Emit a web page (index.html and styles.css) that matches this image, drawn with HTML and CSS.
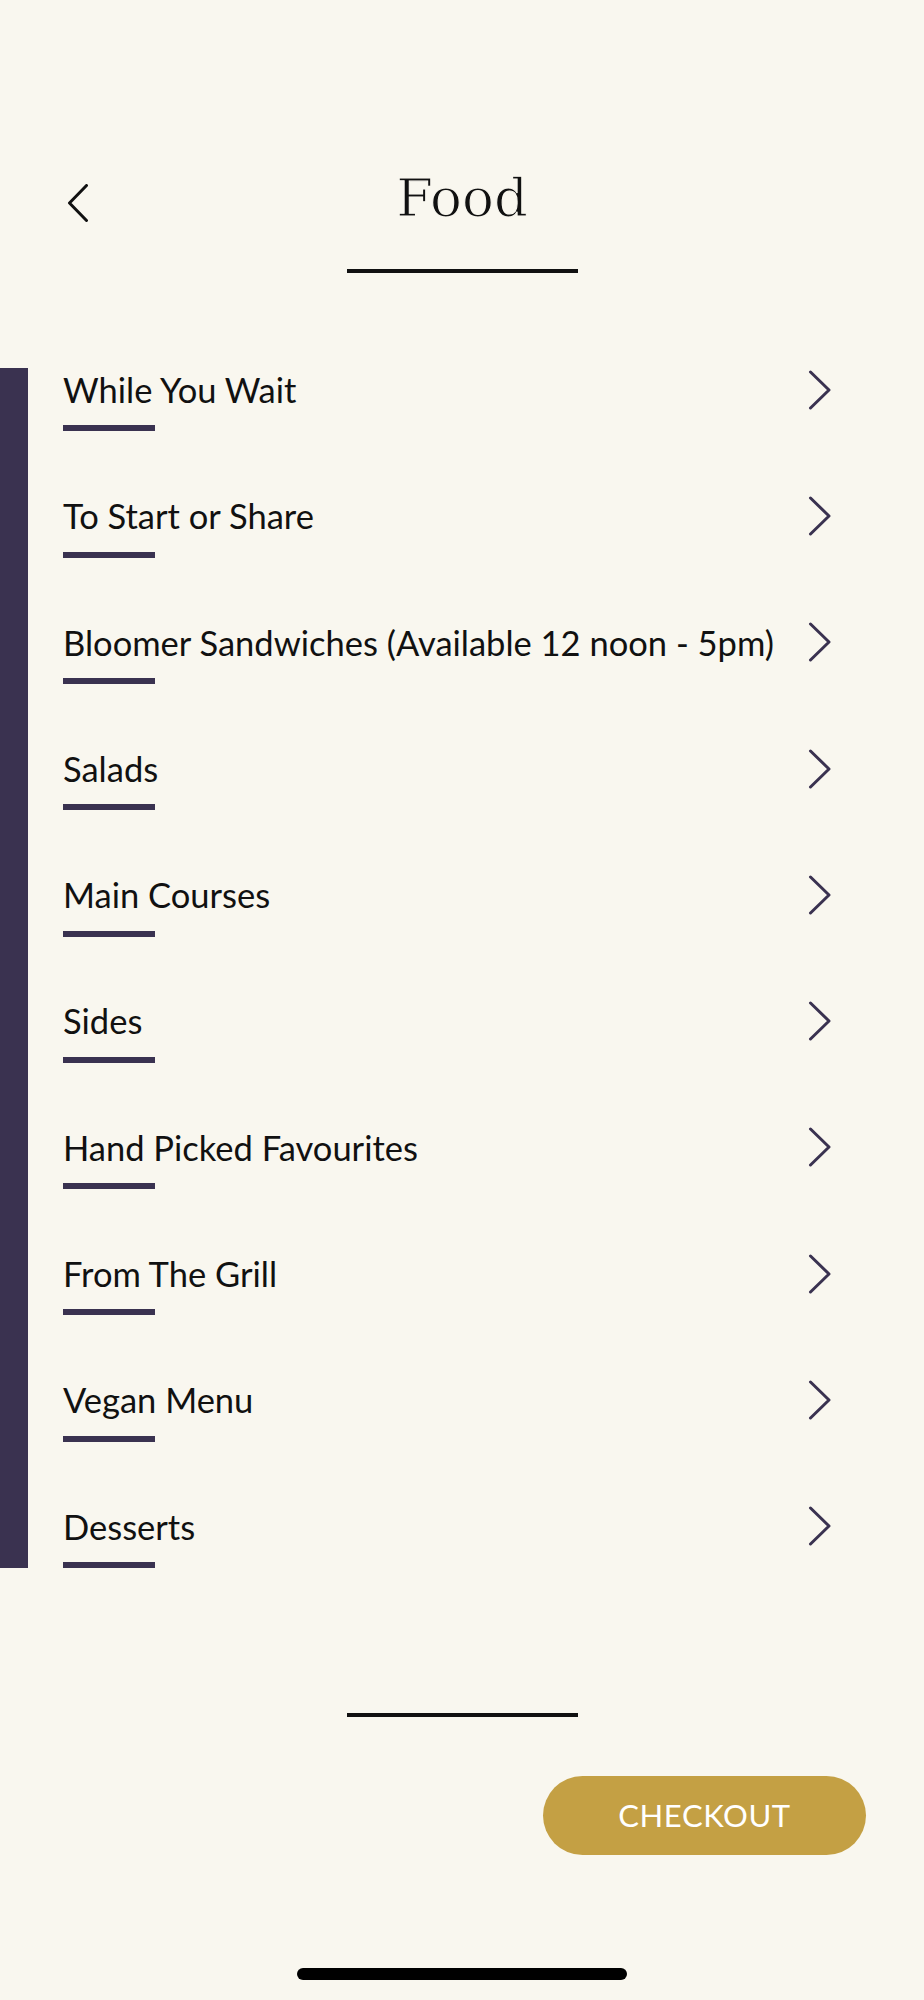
FILE: index.html
```html
<!DOCTYPE html>
<html lang="en">
<head>
  <meta charset="UTF-8">
  <meta name="viewport" content="width=device-width, initial-scale=1.0">
  <title>Food</title>
  <link rel="stylesheet" href="styles.css">
</head>
<body>
  <div class="screen">
    <!-- Header -->
    <header class="top-bar">
      <div class="title-row">
        <button class="back" aria-label="Back">
          <svg width="22" height="38" viewBox="0 0 22 38">
            <path d="M19.5 1.5 L2.5 19 L19.5 36.5" fill="none" stroke="#111" stroke-width="3" stroke-linecap="round" stroke-linejoin="round"/>
          </svg>
        </button>
        <h1 class="page-title">Food</h1>
        <span></span>
      </div>
      <div class="rule"></div>
    </header>

    <!-- Categories -->
    <ul class="menu">
      <li class="menu-item">
        <div class="menu-row"><span>While You Wait</span><svg class="chev" width="24" height="40" viewBox="0 0 24 40"><path d="M2.5 2 L21 20 L2.5 38"/></svg></div>
        <div class="menu-bar"></div>
      </li>
      <li class="menu-item">
        <div class="menu-row"><span>To Start or Share</span><svg class="chev" width="24" height="40" viewBox="0 0 24 40"><path d="M2.5 2 L21 20 L2.5 38"/></svg></div>
        <div class="menu-bar"></div>
      </li>
      <li class="menu-item">
        <div class="menu-row"><span>Bloomer Sandwiches (Available 12 noon - 5pm)</span><svg class="chev" width="24" height="40" viewBox="0 0 24 40"><path d="M2.5 2 L21 20 L2.5 38"/></svg></div>
        <div class="menu-bar"></div>
      </li>
      <li class="menu-item">
        <div class="menu-row"><span>Salads</span><svg class="chev" width="24" height="40" viewBox="0 0 24 40"><path d="M2.5 2 L21 20 L2.5 38"/></svg></div>
        <div class="menu-bar"></div>
      </li>
      <li class="menu-item">
        <div class="menu-row"><span>Main Courses</span><svg class="chev" width="24" height="40" viewBox="0 0 24 40"><path d="M2.5 2 L21 20 L2.5 38"/></svg></div>
        <div class="menu-bar"></div>
      </li>
      <li class="menu-item">
        <div class="menu-row"><span>Sides</span><svg class="chev" width="24" height="40" viewBox="0 0 24 40"><path d="M2.5 2 L21 20 L2.5 38"/></svg></div>
        <div class="menu-bar"></div>
      </li>
      <li class="menu-item">
        <div class="menu-row"><span>Hand Picked Favourites</span><svg class="chev" width="24" height="40" viewBox="0 0 24 40"><path d="M2.5 2 L21 20 L2.5 38"/></svg></div>
        <div class="menu-bar"></div>
      </li>
      <li class="menu-item">
        <div class="menu-row"><span>From The Grill</span><svg class="chev" width="24" height="40" viewBox="0 0 24 40"><path d="M2.5 2 L21 20 L2.5 38"/></svg></div>
        <div class="menu-bar"></div>
      </li>
      <li class="menu-item">
        <div class="menu-row"><span>Vegan Menu</span><svg class="chev" width="24" height="40" viewBox="0 0 24 40"><path d="M2.5 2 L21 20 L2.5 38"/></svg></div>
        <div class="menu-bar"></div>
      </li>
      <li class="menu-item">
        <div class="menu-row"><span>Desserts</span><svg class="chev" width="24" height="40" viewBox="0 0 24 40"><path d="M2.5 2 L21 20 L2.5 38"/></svg></div>
        <div class="menu-bar"></div>
      </li>
    </ul>

    <div class="rule rule-bottom"></div>

    <div class="actions">
      <button class="checkout">CHECKOUT</button>
    </div>

    <div class="home-indicator"></div>
  </div>
</body>
</html>
```

FILE: styles.css
```css
body {
  margin: 0;
  padding: 0;
  background-color: #f9f7ef;
  font-family: Lato, "Open Sans", Arial, sans-serif;
  color: #111;
}

.screen {
  width: 924px;
  min-height: 2000px;
  display: flex;
  flex-direction: column;
}

/* Header */
.top-bar {
  padding-top: 167px;
}

.title-row {
  display: grid;
  grid-template-columns: 1fr auto 1fr;
  align-items: start;
}

.back {
  justify-self: start;
  margin: 17px 0 0 67px;
  padding: 0;
  border: none;
  background: none;
  line-height: 0;
  cursor: pointer;
}

.page-title {
  margin: 0;
  font-family: "DejaVu Serif", "Liberation Serif", serif;
  font-size: 53px;
  font-weight: normal;
  line-height: normal;
  color: #111;
  -webkit-text-stroke: 1.1px #f9f7ef;
}

.rule {
  width: 231px;
  height: 4px;
  margin: 41px auto 0;
  background: #111;
}

/* Category list */
.menu {
  list-style: none;
  margin: 95px 0 0;
  padding: 1px 92px 0 35px;
  border-left: 28px solid #3a3250;
  display: flex;
  flex-direction: column;
  gap: 63.9px;
}

.menu-row {
  display: flex;
  justify-content: space-between;
  align-items: center;
  font-size: 34.5px;
  line-height: 1.2;
}

.chev {
  flex: none;
}

.chev path {
  fill: none;
  stroke: #3a3250;
  stroke-width: 3;
  stroke-linecap: round;
  stroke-linejoin: round;
}

.menu-bar {
  width: 92px;
  height: 6px;
  margin-top: 15px;
  background: #3a3250;
}

.rule-bottom {
  margin-top: 145px;
}

/* Checkout */
.actions {
  display: flex;
  justify-content: flex-end;
  padding-right: 58px;
  margin-top: 59px;
}

.checkout {
  width: 323px;
  height: 79px;
  border: none;
  border-radius: 40px;
  background: #c4a044;
  color: #fff;
  font-family: Lato, Arial, sans-serif;
  font-size: 31px;
  letter-spacing: 0.6px;
  cursor: pointer;
}

.home-indicator {
  width: 330px;
  height: 12px;
  margin: 113px auto 0;
  border-radius: 6px;
  background: #000;
}
```
